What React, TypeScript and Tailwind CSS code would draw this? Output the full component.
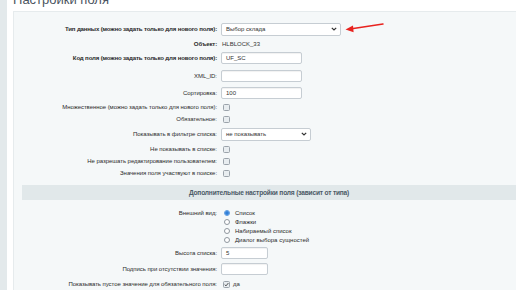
import React from "react";

const font = { fontFamily: '"Liberation Sans", Arial, sans-serif' };

function Label({ children, bold }: { children: React.ReactNode; bold?: boolean }) {
  return (
    <div
      className={`w-[207px] shrink-0 pr-[4px] text-right leading-none text-[#2b2b2b] ${
        bold ? "text-[6.1px] font-bold tracking-[-0.16px]" : "text-[6px] tracking-[-0.05px]"
      }`}
    >
      {children}
    </div>
  );
}

function TextInput({ value, width = 81 }: { value?: string; width?: number }) {
  return (
    <div
      className="h-[12px] rounded-[2px] border border-[#c6cdd3] bg-white pl-[4px] text-[6px] leading-[10px] text-[#333] shadow-[inset_0_1px_1px_rgba(0,0,0,0.06)]"
      style={{ width }}
    >
      {value}
    </div>
  );
}

function Select({ value, width }: { value: string; width: number }) {
  return (
    <div
      className="flex h-[13px] items-center justify-between rounded-[2px] border border-[#c6cdd3] bg-white pl-[4px] pr-[3px] text-[6px] text-[#333]"
      style={{ width }}
    >
      <span>{value}</span>
      <svg width="6" height="4" viewBox="0 0 6 4">
        <path d="M0.8 0.8 L3 3 L5.2 0.8" fill="none" stroke="#333" strokeWidth="1.2" />
      </svg>
    </div>
  );
}

function Checkbox({ checked }: { checked?: boolean }) {
  return (
    <div className="ml-[2px] flex h-[7px] w-[7px] items-center justify-center rounded-[1.5px] border border-[#9ba3ab] bg-[#e8edf0]">
      {checked && (
        <svg width="5" height="5" viewBox="0 0 5 5">
          <path d="M0.7 2.6 L2 3.9 L4.4 1" fill="none" stroke="#444" strokeWidth="0.9" />
        </svg>
      )}
    </div>
  );
}

function Radio({ checked, label }: { checked?: boolean; label: string }) {
  return (
    <div className="ml-[3px] flex h-[9px] items-center gap-[5px]">
      <div
        className={`flex h-[6px] w-[6px] items-center justify-center rounded-full border ${
          checked ? "border-[#5c9be0] bg-[#dbe9f8]" : "border-[#8f979e] bg-white"
        }`}
      >
        {checked && <div className="h-[4px] w-[4px] rounded-full bg-[#2f7fd8]" />}
      </div>
      <span className="text-[6px] leading-none text-[#2b2b2b]">{label}</span>
    </div>
  );
}

function Row({ h, mt = 0, children }: { h: number; mt?: number; children: React.ReactNode }) {
  return (
    <div className="flex items-center" style={{ height: h, marginTop: mt }}>
      {children}
    </div>
  );
}

export default function App() {
  return (
    <div className="relative flex h-[290px] w-[516px] overflow-hidden bg-white" style={font}>
      <div className="w-[7px] shrink-0 bg-[#e3e9eb]" />
      <div className="flex flex-1 flex-col pl-[6px]">
        <div className="-mt-[7px] h-[19px] text-[13px] leading-[13px] text-[#4c5561]">Настройки поля</div>
        <div className="flex-1 border-t border-l border-[#e6ebed] bg-[#f5f8f9] pt-[10px]">
          <Row h={14}>
            <Label bold>Тип данных (можно задать только для нового поля):</Label>
            <Select value="Выбор склада" width={120} />
          </Row>
          <Row h={14} mt={1}>
            <Label bold>Объект:</Label>
            <span className="pl-[1px] text-[6px] text-[#333]">HLBLOCK_33</span>
          </Row>
          <Row h={14}>
            <Label bold>Код поля (можно задать только для нового поля):</Label>
            <TextInput value="UF_SC" />
          </Row>
          <Row h={14} mt={4}>
            <Label>XML_ID:</Label>
            <TextInput />
          </Row>
          <Row h={14} mt={3}>
            <Label>Сортировка:</Label>
            <TextInput value="100" />
          </Row>
          <Row h={12} mt={1}>
            <Label>Множественное (можно задать только для нового поля):</Label>
            <Checkbox />
          </Row>
          <Row h={12}>
            <Label>Обязательное:</Label>
            <Checkbox />
          </Row>
          <Row h={14} mt={2}>
            <Label>Показывать в фильтре списка:</Label>
            <Select value="не показывать" width={90} />
          </Row>
          <Row h={12} mt={2}>
            <Label>Не показывать в списке:</Label>
            <Checkbox />
          </Row>
          <Row h={12}>
            <Label>Не разрешать редактирование пользователем:</Label>
            <Checkbox />
          </Row>
          <Row h={12}>
            <Label>Значения поля участвуют в поиске:</Label>
            <Checkbox />
          </Row>
          <div className="ml-[8px] mt-[6px] flex h-[15px] items-center justify-center bg-[#e1e8ea] text-[6.6px] font-bold tracking-[-0.18px] text-[#4c5a66]">
            Дополнительные настройки поля (зависит от типа)
          </div>
          <div className="mt-[8px] flex">
            <div className="flex h-[9px] items-center">
              <Label>Внешний вид:</Label>
            </div>
            <div className="flex flex-col">
              <Radio checked label="Список" />
              <Radio label="Флажки" />
              <Radio label="Набираемый список" />
              <Radio label="Диалог выбора сущностей" />
            </div>
          </div>
          <Row h={12} mt={3}>
            <Label>Высота списка:</Label>
            <TextInput value="5" width={47} />
          </Row>
          <Row h={12} mt={4}>
            <Label>Подпись при отсутствии значения:</Label>
            <TextInput width={47} />
          </Row>
          <Row h={12} mt={3}>
            <Label>Показывать пустое значение для обязательного поля:</Label>
            <div className="flex items-center gap-[3px]">
              <Checkbox checked />
              <span className="text-[6px] text-[#333]">да</span>
            </div>
          </Row>
        </div>
      </div>
      <svg className="absolute left-[344px] top-[20px]" width="42" height="14" viewBox="0 0 42 14">
        <path d="M6 9 L39 4" stroke="#e8231f" strokeWidth="1.5" strokeLinecap="round" />
        <path d="M1.5 9.6 L9 5.6 L9.6 12.2 Z" fill="#e8231f" />
      </svg>
    </div>
  );
}
